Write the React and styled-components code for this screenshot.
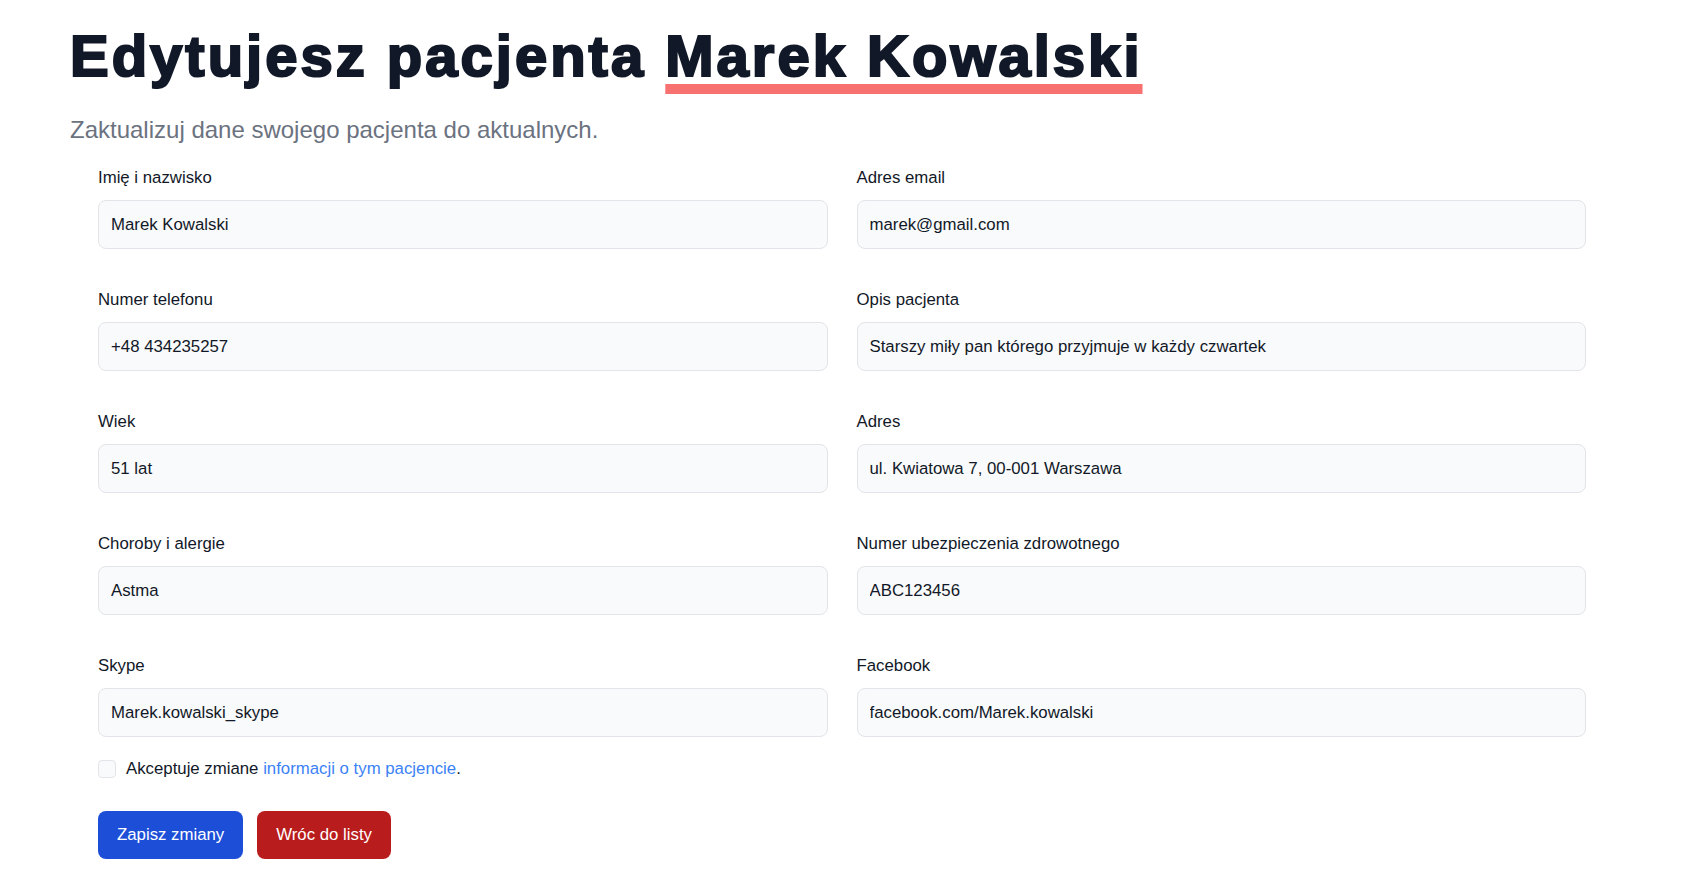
import React, { useState } from "react";
import styled, { createGlobalStyle } from "styled-components";

const GlobalStyle = createGlobalStyle`
  body {
    margin: 0;
    background: #ffffff;
    font-family: "Liberation Sans", Arial, sans-serif;
    color: #111827;
  }
  * { box-sizing: border-box; }
`;

const Page = styled.div`
  padding: 24px 0 40px 70px;
`;

const Title = styled.h1`
  margin: 0;
  font-size: 58px;
  line-height: 64px;
  font-weight: 800;
  color: #111827;
  letter-spacing: 3px;
  -webkit-text-stroke: 2.2px #111827;
`;

const Highlight = styled.span`
  text-decoration: underline;
  text-decoration-color: #f87171;
  text-decoration-thickness: 10px;
  text-underline-offset: 8px;
`;

const Lead = styled.p`
  margin: 26px 0 0;
  font-size: 24px;
  line-height: 32px;
  color: #6b7280;
`;

const Form = styled.form`
  width: 1488px;
  margin: 20px 0 0 28px;
`;

const Grid = styled.div`
  display: grid;
  grid-template-columns: 1fr 1fr;
  column-gap: 29px;
  row-gap: 39px;
`;

const Field = styled.div`
  display: flex;
  flex-direction: column;
`;

const Label = styled.label`
  font-size: 16.8px;
  line-height: 24px;
  margin-bottom: 10px;
  color: #111827;
`;

const Input = styled.input`
  height: 49px;
  padding: 0 12px;
  border: 1px solid #e2e4e9;
  border-radius: 8px;
  background: #f9fafb;
  font-family: "Liberation Sans", Arial, sans-serif;
  font-size: 16.8px;
  color: #111827;
  outline: none;
`;

const CheckRow = styled.div`
  display: flex;
  align-items: center;
  gap: 10px;
  margin-top: 23px;
  font-size: 16.8px;
  line-height: 18px;
`;

const Box = styled.input`
  appearance: none;
  width: 18px;
  height: 18px;
  margin: 0;
  border: 1px solid #e2e4e9;
  border-radius: 4px;
  background: #f9fafb;
`;

const Link = styled.a`
  color: #3b82f6;
  text-decoration: none;
`;

const Actions = styled.div`
  display: flex;
  gap: 14px;
  margin-top: 33px;
`;

const Button = styled.button`
  height: 48px;
  padding: 0 19px;
  border: none;
  border-radius: 8px;
  font-family: "Liberation Sans", Arial, sans-serif;
  font-size: 16.8px;
  color: #ffffff;
  background: ${(p) => (p.$danger ? "#b91c1c" : "#1d4ed8")};
  cursor: pointer;
`;

const fields = [
  ["Imię i nazwisko", "Marek Kowalski"],
  ["Adres email", "marek@gmail.com"],
  ["Numer telefonu", "+48 434235257"],
  ["Opis pacjenta", "Starszy miły pan którego przyjmuje w każdy czwartek"],
  ["Wiek", "51 lat"],
  ["Adres", "ul. Kwiatowa 7, 00-001 Warszawa"],
  ["Choroby i alergie", "Astma"],
  ["Numer ubezpieczenia zdrowotnego", "ABC123456"],
  ["Skype", "Marek.kowalski_skype"],
  ["Facebook", "facebook.com/Marek.kowalski"],
];

export default function App() {
  const [values, setValues] = useState(fields.map((f) => f[1]));

  const handleChange = (i, v) => {
    const next = [...values];
    next[i] = v;
    setValues(next);
  };

  return (
    <>
      <GlobalStyle />
      <Page>
        <Title>
          Edytujesz pacjenta <Highlight>Marek Kowalski</Highlight>
        </Title>
        <Lead>Zaktualizuj dane swojego pacjenta do aktualnych.</Lead>

        <Form onSubmit={(e) => e.preventDefault()}>
          <Grid>
            {fields.map(([label], i) => (
              <Field key={label}>
                <Label htmlFor={"f" + i}>{label}</Label>
                <Input
                  id={"f" + i}
                  value={values[i]}
                  onChange={(e) => handleChange(i, e.target.value)}
                />
              </Field>
            ))}
          </Grid>

          <CheckRow>
            <Box type="checkbox" id="accept" />
            <label htmlFor="accept">
              Akceptuje zmiane <Link href="#">informacji o tym pacjencie</Link>.
            </label>
          </CheckRow>

          <Actions>
            <Button type="submit">Zapisz zmiany</Button>
            <Button type="button" $danger>
              Wróc do listy
            </Button>
          </Actions>
        </Form>
      </Page>
    </>
  );
}
